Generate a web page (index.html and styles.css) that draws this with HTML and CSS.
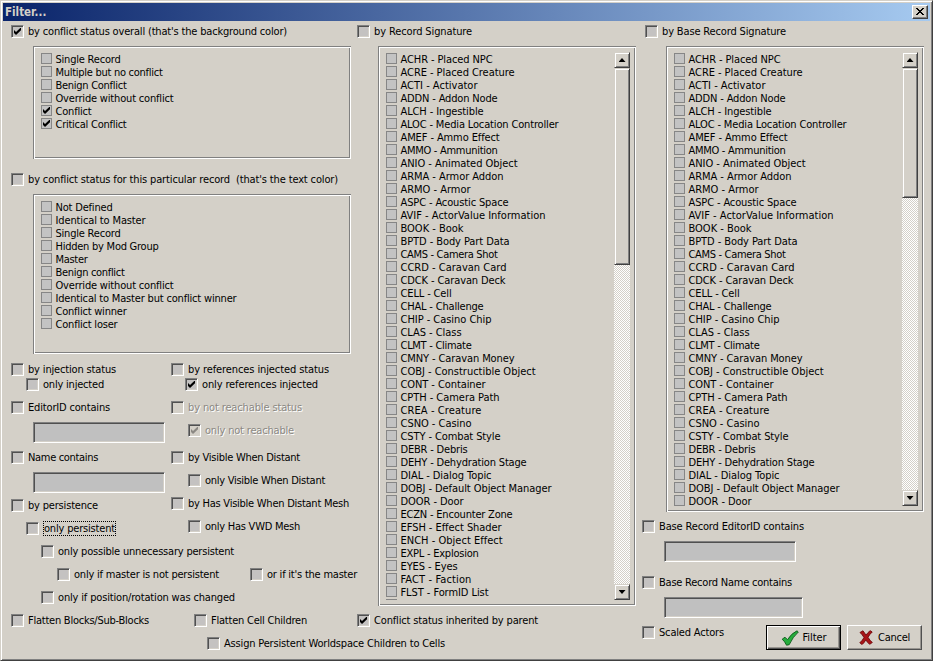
FILE: index.html
```html
<!DOCTYPE html>
<html lang="en">
<head>
<meta charset="utf-8">
<title>Filter...</title>
<link rel="stylesheet" href="styles.css">
</head>
<body>
<div class="window">
  <header class="titlebar"><span>Filter...</span>
    <button class="close" aria-label="Close"><svg width="8" height="7" viewBox="0 0 8 7"><path d="M0 0h2v1h1v1h2V1h1V0h2v1H7v1H6v1H5v1h1v1h1v1h1v1H6V6H5V5H3v1H2v1H0V6h1V5h1V4h1V3H2V2H1V1H0z"/></svg></button>
  </header>
  <main class="content">
    <div class="primary">
      <div class="columns">
        <section class="left">
          <label class="check on"><i></i><span data-w="259">by conflict status overall (that's the background color)</span></label>
          <div class="group overall" data-list="overall"></div>
          <label class="check second"><i></i><span data-w="310">by conflict status for this particular record&nbsp; (that's the text color)</span></label>
          <div class="group particular" data-list="particular"></div>
          <div class="pair">
            <div class="stack">
              <label class="check"><i></i><span data-w="88">by injection status</span></label>
              <label class="check in15"><i></i><span data-w="61">only injected</span></label>
              <label class="check gap8"><i></i><span data-w="82">EditorID contains</span></label>
              <div class="field"></div>
              <label class="check gap7"><i></i><span data-w="70">Name contains</span></label>
              <div class="field"></div>
              <label class="check gap5"><i></i><span data-w="70">by persistence</span></label>
              <label class="check in15 gap8 focus"><i></i><span data-w="71">only persistent</span></label>
            </div>
            <div class="stack">
              <label class="check"><i></i><span data-w="141">by references injected status</span></label>
              <label class="check on in14"><i></i><span data-w="116">only references injected</span></label>
              <label class="check gap8 disabled"><i></i><span data-w="114">by not reachable status</span></label>
              <label class="check on in17 gap8 disabled"><i></i><span data-w="89">only not reachable</span></label>
              <label class="check gap12"><i></i><span data-w="112">by Visible When Distant</span></label>
              <label class="check in17 gap8"><i></i><span data-w="120">only Visible When Distant</span></label>
              <label class="check gap8"><i></i><span data-w="161">by Has Visible When Distant Mesh</span></label>
              <label class="check in17 gap8"><i></i><span data-w="95">only Has VWD Mesh</span></label>
            </div>
          </div>
          <label class="check in30 gap8"><i></i><span data-w="176">only possible unnecessary persistent</span></label>
          <div class="row gap8">
            <label class="check in46 master"><i></i><span data-w="145">only if master is not persistent</span></label>
            <label class="check"><i></i><span data-w="90">or if it's the master</span></label>
          </div>
          <label class="check in30 gap8"><i></i><span data-w="177">only if position/rotation was changed</span></label>
        </section>
        <section class="middle">
          <label class="check"><i></i><span data-w="98">by Record Signature</span></label>
          <div class="group records"><div class="items" data-list="records"></div>
            <div class="scroll"><b class="up"></b><b class="thumb"></b><b class="down"></b></div></div>
        </section>
      </div>
      <div class="row flatten">
        <label class="check blocks"><i></i><span data-w="121">Flatten Blocks/Sub-Blocks</span></label>
        <label class="check cells"><i></i><span data-w="96">Flatten Cell Children</span></label>
        <label class="check on"><i></i><span data-w="164">Conflict status inherited by parent</span></label>
      </div>
      <label class="check assign gap8"><i></i><span data-w="221">Assign Persistent Worldspace Children to Cells</span></label>
    </div>
    <section class="right">
      <label class="check base"><i></i><span data-w="124">by Base Record Signature</span></label>
      <div class="group records base-records"><div class="items" data-list="records"></div>
        <div class="scroll"><b class="up"></b><b class="thumb"></b><b class="down"></b></div></div>
      <label class="check gap7"><i></i><span data-w="145">Base Record EditorID contains</span></label>
      <div class="field"></div>
      <label class="check gap13"><i></i><span data-w="133">Base Record Name contains</span></label>
      <div class="field wide"></div>
      <div class="row actions">
        <label class="check"><i></i><span data-w="65">Scaled Actors</span></label>
        <button class="button default"><svg width="18" height="16" viewBox="0 0 18 16"><path class="tick" d="M1.2 9.200 4 7.200 6.500 9.700Q10.200 3.500 16 .8L17.300 2Q11.700 7 8.200 14.700L5.500 15.200Q3.900 11.500 1.200 9.200z"/></svg><span data-w="24">Filter</span></button>
        <button class="button"><svg width="14" height="15" viewBox="0 0 14 15"><path class="cross" d="M1 2.500 4 .8Q5.500 2.900 7 5.200 8.900 2.200 11.200.7L13.200 2Q10.700 4.200 9 7.300 11 10.600 13.300 12.500L10.600 14.300Q8.500 12.500 6.800 9.900 5.200 12.800 3.100 14.500L.8 12.800Q3.500 10.500 5 7.500 3.300 4.500 1 2.500z"/></svg><span data-w="32">Cancel</span></button>
      </div>
    </section>
  </main>
</div>
<script src="script.js"></script>
</body>
</html>
```
FILE: styles.css
```css
* { box-sizing: border-box; }
body { margin: 0; overflow: hidden; background: #d4d0c8; color: #000; font: 11px/13px "DejaVu Sans Condensed", "Noto Sans", sans-serif; }
.window { width: 933px; height: 661px; padding: 1px; border: 1px solid; border-color: #d4d0c8 #404040 #404040 #d4d0c8; box-shadow: inset 1px 1px #fff, inset -1px -1px #808080; }
.titlebar { display: flex; align-items: center; justify-content: space-between; height: 18px; margin: 1px 1px 0; padding: 0 2px; background: linear-gradient(90deg, #0a246a, #a6caf0); color: #d4d0c8; font: bold 11.5px/18px "DejaVu Sans Condensed", sans-serif; }
.close { display: grid; place-items: center; width: 16px; height: 14px; padding: 0 1px 1px 0; background: #d4d0c8; border: 1px solid; border-color: #fff #404040 #404040 #fff; box-shadow: inset -1px -1px #808080; }
.content { display: flex; padding: 3px 0 0 9px; }
.primary { width: 631px; }
.columns { display: flex; }
.left { width: 346px; flex: none; }
.right { width: 282px; }
.check { display: flex; align-items: center; height: 15px; white-space: nowrap; }
.check i { position: relative; flex: none; width: 13px; height: 13px; margin-right: 4px; background: #c4c2c1; border: 1px solid; border-color: #808080 #fff #fff #808080; box-shadow: inset 1px 1px #505050, inset -1px -1px #d4d0c8; }
.check span, .item span, .button span { white-space: nowrap; }
.check.on i::after, .item.on i::after { content: ""; position: absolute; left: 2px; top: 2px; width: 7px; height: 7px; background: currentColor; clip-path: polygon(0 28%, 29% 57%, 100% -10%, 100% 33%, 29% 100%, 0 71%); }
.item.on i::after { left: 1px; top: 1px; }
.disabled { color: #8b8883; text-shadow: 1px 1px #fff; }
.disabled i { background: #d4d0c8; }
.focus span { margin-left: 1px; outline: 1px dotted #000; outline-offset: 0; }
.in14 { margin-left: 14px; }
.in15 { margin-left: 15px; }
.in17 { margin-left: 17px; }
.in30 { margin-left: 30px; }
.in46 { margin-left: 46px; }
.gap5 { margin-top: 5px; }
.gap7 { margin-top: 7px; }
.gap8 { margin-top: 8px; }
.gap12 { margin-top: 12px; }
.gap13 { margin-top: 13px; }
.second { margin-top: 13px; }
.row, .pair { display: flex; }
.stack:first-child { width: 160px; }
.master { width: 193px; }
.group { padding: 7px 8px; box-shadow: inset 1px 1px #808080, inset -1px -1px #fff, inset 2px 2px #fff, inset -2px -2px #808080; }
.overall, .particular { width: 318px; margin-left: 22px; }
.overall { height: 113px; margin-top: 7px; }
.particular { height: 160px; margin: 7px 0 8px 22px; }
.item { display: flex; height: 13px; }
.item i { position: relative; flex: none; width: 11px; height: 11px; margin-right: 3.5px; background: #c3c3c3; border: 1px solid #868686; }
.item span { line-height: 13px; }
.records { display: flex; justify-content: space-between; width: 258px; height: 560px; margin: 7px 0 0 21px; padding: 6px; }
.items { overflow: hidden; flex: 1; padding: 1px 0 0 2px; }
.scroll { display: flex; flex-direction: column; width: 16px; background: repeating-conic-gradient(#fff 0 25%, #d4d0c8 0 50%) 0 0 / 2px 2px; }
.scroll b { display: grid; place-items: center; height: 16px; background: #d4d0c8; border: 1px solid; border-color: #d4d0c8 #404040 #404040 #d4d0c8; box-shadow: inset 1px 1px #fff, inset -1px -1px #808080; }
.scroll .thumb { height: 197px; }
.base-records .thumb { height: 130px; }
.scroll .down { margin-top: auto; }
.up::after, .down::after { content: ""; width: 7px; height: 4px; background: #000; clip-path: polygon(50% 0, 100% 100%, 0 100%); }
.down::after { transform: scaleY(-1); }
.flatten { margin-top: 7px; }
.blocks { width: 183px; }
.cells { width: 163px; }
.assign { margin-left: 196px; }
.base { margin-left: 3px; }
.records.base-records { height: 466px; margin-left: 24px; }
.base-records .items { overflow: visible; }
.field { width: 132px; height: 21px; margin: 7px 0 0 22px; background: #c0c0c0; border: 1px solid; border-color: #808080 #fff #fff #808080; box-shadow: inset 1px 1px #505050, inset -1px -1px #d4d0c8; }
.wide { width: 139px; }
.actions { margin-top: 7px; }
.actions .check { width: 124px; }
.button { display: flex; align-items: center; justify-content: center; gap: 5px; width: 75px; height: 25px; padding: 0; background: #d4d0c8; border: 1px solid; border-color: #fff #505050 #505050 #fff; box-shadow: inset -1px -1px #989590; color: #000; font: inherit; }
.button.default { margin-right: 6px; gap: 4px; border-color: #000; box-shadow: inset 1px 1px #fff, inset -1px -1px #505050, inset -2px -2px #989590; }
.tick { fill: #25ac3c; stroke: #0b5a18; stroke-width: .9; }
.cross { fill: #a81418; stroke: #6f080b; stroke-width: .9; }
```
FILE: script.js
```js
const lists = {
  overall: ["Single Record", "Multiple but no conflict", "Benign Conflict", "Override without conflict", "*Conflict", "*Critical Conflict"],
  particular: ["Not Defined", "Identical to Master", "Single Record", "Hidden by Mod Group", "Master", "Benign conflict", "Override without conflict", "Identical to Master but conflict winner", "Conflict winner", "Conflict loser"],
  records: ["ACHR - Placed NPC", "ACRE - Placed Creature", "ACTI - Activator", "ADDN - Addon Node", "ALCH - Ingestible", "ALOC - Media Location Controller", "AMEF - Ammo Effect", "AMMO - Ammunition", "ANIO - Animated Object", "ARMA - Armor Addon", "ARMO - Armor", "ASPC - Acoustic Space", "AVIF - ActorValue Information", "BOOK - Book", "BPTD - Body Part Data", "CAMS - Camera Shot", "CCRD - Caravan Card", "CDCK - Caravan Deck", "CELL - Cell", "CHAL - Challenge", "CHIP - Casino Chip", "CLAS - Class", "CLMT - Climate", "CMNY - Caravan Money", "COBJ - Constructible Object", "CONT - Container", "CPTH - Camera Path", "CREA - Creature", "CSNO - Casino", "CSTY - Combat Style", "DEBR - Debris", "DEHY - Dehydration Stage", "DIAL - Dialog Topic", "DOBJ - Default Object Manager", "DOOR - Door", "ECZN - Encounter Zone", "EFSH - Effect Shader", "ENCH - Object Effect", "EXPL - Explosion", "EYES - Eyes", "FACT - Faction", "FLST - FormID List", ""]
};
// Column widths of the list captions, in pixels.
const widths = {
  overall: [65, 107, 71, 118, 36, 71],
  particular: [57, 90, 65, 103, 32, 69, 118, 181, 71, 62],
  records: [92, 114, 77, 97, 83, 158, 99, 97, 117, 103, 70, 108, 145, 63, 109, 97, 106, 105, 51, 83, 91, 61, 71, 114, 135, 85, 99, 81, 71, 100, 67, 126, 91, 151, 63, 112, 101, 102, 78, 57, 71, 88, 0]
};
document.querySelectorAll("[data-list]").forEach(box => {
  const name = box.dataset.list;
  const visible = box.closest(".base-records") ? 35 : lists[name].length;
  lists[name].slice(0, visible).forEach((raw, n) => {
    const item = document.createElement("label");
    item.className = raw.startsWith("*") ? "item on" : "item";
    const text = document.createElement("span");
    text.textContent = raw.replace("*", "");
    text.dataset.w = widths[name][n];
    item.append(document.createElement("i"), text);
    box.append(item);
  });
});
// Adjust tracking so each caption fills its intended width.
document.querySelectorAll("[data-w]").forEach(el => {
  const count = el.textContent.length;
  if (count) el.style.letterSpacing = (el.dataset.w - el.getBoundingClientRect().width) / count + "px";
});
```
